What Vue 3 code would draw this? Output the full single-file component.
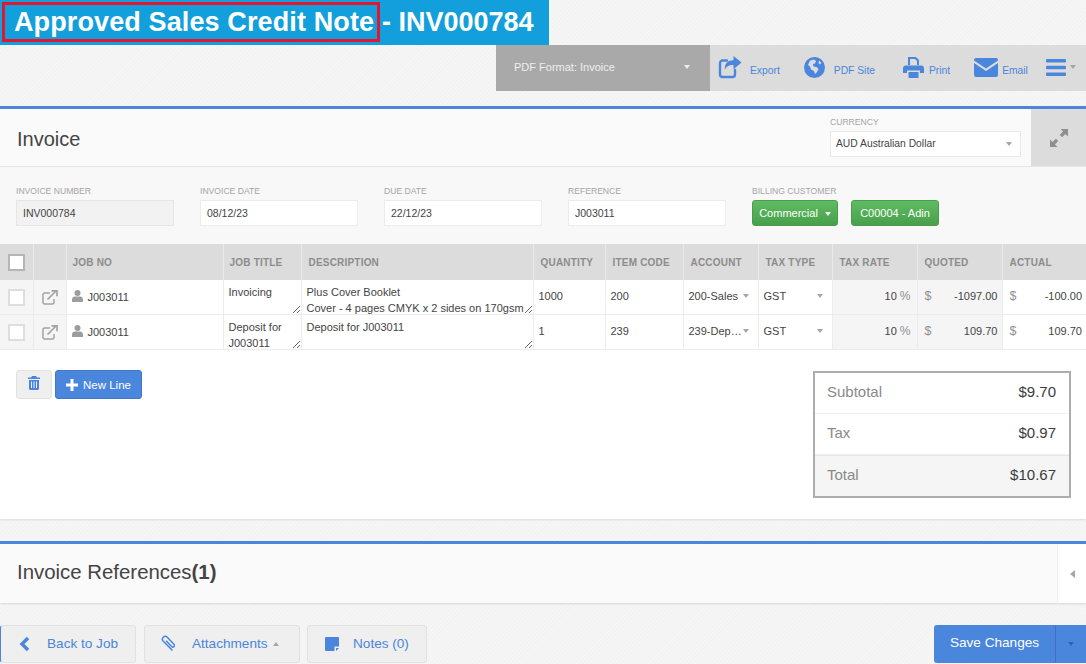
<template>
  <div class="page">
    <!-- Title banner -->
    <header class="banner">
      <span class="status">Approved Sales Credit Note</span>
      <span class="inv">- INV000784</span>
    </header>

    <!-- Toolbar -->
    <div class="toolbar">
      <div class="pdf-format"><span>PDF Format: Invoice</span><i class="caret light"></i></div>
      <nav class="tools">
        <a class="tool export">
          <svg width="24" height="24" viewBox="0 0 24 24" fill="none" stroke="#4a86dc" stroke-width="2.4">
            <path d="M17 15v4.5a2.5 2.5 0 0 1-2.5 2.500H4.500A2.500 2.500 0 0 1 2 19.500V8a2.500 2.500 0 0 1 2.500-2.500H9" stroke-linecap="round"/>
            <path d="M15.500 1v4.200C10 5.200 6.500 8 6.800 15c1.500-3.800 4.500-5 8.700-5v4.300L23.500 7.500z" fill="#4a86dc" stroke="none"/>
          </svg>
          <span>Export</span>
        </a>
        <a class="tool site">
          <svg width="21" height="21" viewBox="0 0 21 21">
            <circle cx="10.500" cy="10.500" r="10.500" fill="#4a86dc"/>
            <path d="M6 3.500l4-1 2 1.500-1 2.500-2 .5.500 2.500 3 .5 2 2-1.500 3-2 2-1-3-3-1.500-1-3-2-1.500zM15 3.500l2.500 2.500-1.500 1.500-1.500-1.500z" fill="#dcdcdc"/>
          </svg>
          <span>PDF Site</span>
        </a>
        <a class="tool print">
          <svg width="21" height="21" viewBox="0 0 21 21" fill="#4a86dc">
            <path d="M5 0h8l3 3v5h-2V4l-2-2H7v6H5zM3 8.500h15a3 3 0 0 1 3 3V16h-4v-2.500H4V16H0v-4.500a3 3 0 0 1 3-3zM5.500 15h10v6h-10z"/>
          </svg>
          <span>Print</span>
        </a>
        <a class="tool email">
          <svg width="24" height="19" viewBox="0 0 24 19" fill="#4a86dc">
            <path d="M2 0h20a2 2 0 0 1 2 2v.6L12 10.500 0 2.600V2a2 2 0 0 1 2-2z"/>
            <path d="M0 5l12 8 12-8v12a2 2 0 0 1-2 2H2a2 2 0 0 1-2-2z"/>
          </svg>
          <span>Email</span>
        </a>
        <a class="tool burger">
          <svg width="20" height="17" viewBox="0 0 20 17" fill="#4a86dc">
            <rect width="20" height="3.500" rx="1"/>
            <rect y="6.700" width="20" height="3.500" rx="1"/>
            <rect y="13.400" width="20" height="3.500" rx="1"/>
          </svg>
          <i class="caret"></i>
        </a>
      </nav>
    </div>

    <!-- Invoice panel -->
    <section class="panel">
      <div class="panel-head">
        <h1>Invoice</h1>
        <div class="currency">
          <label>CURRENCY</label>
          <div class="select-box"><span>AUD Australian Dollar</span><i class="caret"></i></div>
        </div>
        <div class="expand">
          <svg width="18" height="18" viewBox="0 0 18 18" fill="#8f8f8f">
            <path d="M10.500 0H18v7.500l-2.600-2.600-3.300 3.300-2.300-2.300 3.300-3.300zM0 18v-7.500l2.600 2.600 3.300-3.300 2.300 2.300-3.300 3.300L7.500 18z"/>
          </svg>
        </div>
      </div>

      <div class="fields">
        <div class="field" v-for="f in fields" :key="f.label">
          <label>{{ f.label }}</label>
          <div class="input" :class="{ readonly: f.readonly }">{{ f.value }}</div>
        </div>
        <div class="field billing">
          <label>BILLING CUSTOMER</label>
          <div class="billing-btns">
            <button class="green commercial">Commercial<i class="caret light"></i></button>
            <button class="green adin">C00004 - Adin</button>
          </div>
        </div>
      </div>

      <table class="lines">
        <colgroup>
          <col v-for="(w, i) in colWidths" :key="i" :style="{ width: w + 'px' }" />
        </colgroup>
        <thead>
          <tr>
            <th class="center"><span class="check head"></span></th>
            <th></th>
            <th class="tight">JOB NO</th>
            <th class="tight">JOB TITLE</th>
            <th>DESCRIPTION</th>
            <th>QUANTITY</th>
            <th>ITEM CODE</th>
            <th>ACCOUNT</th>
            <th>TAX TYPE</th>
            <th>TAX RATE</th>
            <th>QUOTED</th>
            <th>ACTUAL</th>
          </tr>
        </thead>
        <tbody>
          <tr v-for="row in rows" :key="row.title">
            <td class="center shade"><span class="check"></span></td>
            <td class="center shade">
              <svg class="ext" width="16" height="15" viewBox="0 0 16 15" fill="none" stroke="#a3a3a3" stroke-width="1.500">
                <path d="M12 9v3.500a1.500 1.500 0 0 1-1.500 1.500h-8A1.500 1.500 0 0 1 1 12.500v-8A1.500 1.500 0 0 1 2.500 3H8"/>
                <path d="M5.500 9.500L14 1M9.500 .8H15v5.500" stroke-width="1.700"/>
              </svg>
            </td>
            <td class="job">
              <svg width="11" height="12" viewBox="0 0 11 12" fill="#9d9d9d">
                <circle cx="5.500" cy="3" r="3"/>
                <path d="M0 12V9.500C0 7.500 1.500 6.500 3 6.500h5c1.500 0 3 1 3 3V12z"/>
              </svg>
              <span>{{ row.job }}</span>
            </td>
            <td class="area"><textarea class="title-area">{{ row.title }}</textarea></td>
            <td class="area"><textarea class="desc-area">{{ row.desc }}</textarea></td>
            <td class="plain">{{ row.qty }}</td>
            <td class="plain">{{ row.code }}</td>
            <td class="pick"><div><span>{{ row.account }}</span><i class="caret"></i></div></td>
            <td class="pick"><div><span>GST</span><i class="caret"></i></div></td>
            <td class="rate shade">10 <em>%</em></td>
            <td class="money shade"><div><em>$</em><span>{{ row.quoted }}</span></div></td>
            <td class="money"><div><em>$</em><span>{{ row.actual }}</span></div></td>
          </tr>
        </tbody>
      </table>

      <div class="below">
        <div class="line-btns">
          <button class="trash">
            <svg width="12" height="14" viewBox="0 0 12 14" fill="#4a86dc">
              <path d="M4 0h4l1 1.500h3V3H0V1.500h3zM1 4h10v8.500a1.500 1.500 0 0 1-1.500 1.500h-7A1.500 1.500 0 0 1 1 12.500zm2 1.500V12h1V5.500zm2.500 0V12h1V5.500zm2.500 0V12h1V5.500z" fill-rule="evenodd"/>
            </svg>
          </button>
          <button class="new-line">
            <svg width="12" height="12" viewBox="0 0 12 12" fill="#fff">
              <path d="M4.500 0h3v4.500H12v3H7.500V12h-3V7.500H0v-3h4.500z"/>
            </svg>
            New Line
          </button>
        </div>
        <div class="totals">
          <div class="total-row" v-for="t in totals" :key="t.label" :class="{ grand: t.label === 'Total' }">
            <span>{{ t.label }}</span><b>{{ t.value }}</b>
          </div>
        </div>
      </div>
    </section>

    <!-- References panel -->
    <section class="refs">
      <h2>Invoice References<b>(1)</b></h2>
      <div class="refs-toggle"><i class="caret-left"></i></div>
    </section>

    <!-- Footer actions -->
    <footer class="actions">
      <button class="foot back">
        <svg width="11" height="16" viewBox="0 0 11 16" fill="none" stroke="#4a86dc" stroke-width="3.400"><path d="M9 2L3 8l6 6"/></svg>
        Back to Job
      </button>
      <button class="foot attach">
        <svg width="14" height="17" viewBox="0 0 14 17" fill="none" stroke="#4a86dc" stroke-width="1.500">
          <path d="M11.500 15.500L2.300 6.200a2.800 2.800 0 0 1 4-4l6.800 7.300a1.600 1.600 0 0 1-2.300 2.200L5 5.800"/>
        </svg>
        <span>Attachments<i class="caret up"></i></span>
      </button>
      <button class="foot notes">
        <svg width="14" height="14" viewBox="0 0 14 14" fill="#4a86dc"><path d="M1 0h12a1 1 0 0 1 1 1v8.500H9.500V14H1a1 1 0 0 1-1-1V1a1 1 0 0 1 1-1zM11 11h3l-3 3z"/></svg>
        Notes (0)
      </button>
      <div class="save">
        <span class="save-main">Save Changes</span>
        <span class="save-drop"><i class="caret dark"></i></span>
      </div>
    </footer>
  </div>
</template>

<script setup>
const fields = [
  { label: 'INVOICE NUMBER', value: 'INV000784', readonly: true },
  { label: 'INVOICE DATE', value: '08/12/23' },
  { label: 'DUE DATE', value: '22/12/23' },
  { label: 'REFERENCE', value: 'J003011' }
]

const colWidths = [33, 33, 157, 78, 232, 72, 78, 75, 74, 85, 85, 84]

const rows = [
  {
    job: 'J003011',
    title: 'Invoicing',
    desc: 'Plus Cover Booklet\nCover - 4 pages CMYK x 2 sides on 170gsm',
    qty: '1000',
    code: '200',
    account: '200-Sales',
    quoted: '-1097.00',
    actual: '-100.00'
  },
  {
    job: 'J003011',
    title: 'Deposit for J003011',
    desc: 'Deposit for J003011',
    qty: '1',
    code: '239',
    account: '239-Dep…',
    quoted: '109.70',
    actual: '109.70'
  }
]

const totals = [
  { label: 'Subtotal', value: '$9.70' },
  { label: 'Tax', value: '$0.97' },
  { label: 'Total', value: '$10.67' }
]
</script>

<style>
html, body {
  margin: 0;
  overflow: hidden;
}
</style>

<style scoped>
.page {
  width: 1086px;
  height: 664px;
  overflow: hidden;
  font-family: "Liberation Sans", Arial, sans-serif;
  color: #333;
  background-color: #f4f4f4;
  background-image: repeating-linear-gradient(135deg, #f6f6f6 0, #f6f6f6 1px, #f2f2f2 2px, #f4f4f4 3px);
}

.banner {
  box-sizing: border-box;
  width: 549px;
  height: 45px;
  padding: 2px 0 3px 2px;
  background: #129fdb;
  color: #fff;
  font-size: 27px;
  font-weight: 700;
  display: flex;
  align-items: center;
}

.status {
  box-sizing: border-box;
  height: 40px;
  width: 378px;
  border: 3px solid #e2162e;
  padding-left: 9px;
  line-height: 34px;
  letter-spacing: 0.12px;
  white-space: nowrap;
}

.inv {
  margin-left: 2px;
  white-space: nowrap;
}

.toolbar {
  height: 46px;
  padding-left: 496px;
  display: flex;
}

.pdf-format {
  box-sizing: border-box;
  width: 214px;
  padding: 0 20px 3px 18px;
  background: #a9a9a9;
  color: #eee;
  font-size: 11px;
  display: flex;
  align-items: center;
  justify-content: space-between;
}

.tools {
  flex: 1;
  box-sizing: border-box;
  padding-bottom: 2px;
  background: #dcdcdc;
  display: flex;
  align-items: center;
  color: #4a86dc;
  font-size: 10.300px;
}

.tool {
  display: flex;
  align-items: center;
}

.tool span {
  margin-top: 6px;
}

.export {
  margin-left: 8px;
}

.export span {
  margin-left: 8px;
}

.site {
  margin-left: 24px;
}

.site span {
  margin-left: 9px;
}

.print {
  margin-left: 28px;
}

.print span {
  margin-left: 5px;
}

.email {
  margin-left: 24px;
}

.email span {
  margin-left: 4px;
}

.burger {
  margin-left: 18px;
}

.burger .caret {
  margin-left: 4px;
}

.caret {
  display: inline-block;
  width: 0;
  height: 0;
  border-left: 3px solid transparent;
  border-right: 3px solid transparent;
  border-top: 4px solid #a6a6a6;
}

.caret.light {
  border-top-color: #eee;
}

.caret.dark {
  border-top-color: #2f64b3;
}

.caret.up {
  border-top: none;
  border-bottom: 4px solid #a6a6a6;
  margin-left: 5px;
  vertical-align: middle;
}

.panel {
  margin-top: 15px;
  background: #fff;
  border-top: 3px solid #4a86dc;
  height: 410px;
  box-shadow: 0 1px 2px rgba(0, 0, 0, 0.1);
}

.panel-head {
  height: 58px;
  background: #fafafa;
  border-bottom: 1px solid #e6e6e6;
  box-sizing: border-box;
  display: flex;
  align-items: stretch;
}

.panel-head h1 {
  flex: 1;
  margin: 0;
  padding: 16px 0 0 17px;
  font-size: 20px;
  line-height: 28px;
  font-weight: 400;
  color: #444;
}

.currency {
  width: 191px;
  margin-right: 10px;
  padding-top: 8px;
}

label {
  display: block;
  font-size: 8.600px;
  line-height: 10px;
  color: #a5a5a5;
}

.select-box {
  box-sizing: border-box;
  height: 26px;
  margin-top: 4px;
  padding: 0 8px 1px 5px;
  background: #fff;
  border: 1px solid #e8e8e8;
  font-size: 10.300px;
  color: #444;
  display: flex;
  align-items: center;
  justify-content: space-between;
}

.expand {
  width: 55px;
  background: #dcdcdc;
  display: flex;
  align-items: center;
  justify-content: center;
}

.fields {
  box-sizing: border-box;
  height: 77px;
  padding: 19px 0 0 16px;
  background: #f8f8f8;
  display: flex;
  gap: 26px;
}

.field {
  width: 158px;
}

.field.billing {
  width: auto;
}

.input {
  box-sizing: border-box;
  height: 26px;
  margin-top: 4px;
  padding: 0 6px;
  line-height: 24px;
  background: #fff;
  border: 1px solid #ececec;
  font-size: 10.500px;
  color: #444;
}

.input.readonly {
  background: #f2f2f2;
  border-color: #e6e6e6;
}

.billing-btns {
  display: flex;
  gap: 13px;
  margin-top: 4px;
}

.green {
  height: 26px;
  padding: 0;
  border: 1px solid #4a9b4c;
  border-radius: 3px;
  background: linear-gradient(#5fbc62, #489f4b);
  color: #fff;
  font: 11px "Liberation Sans", Arial, sans-serif;
}

.commercial {
  width: 86px;
}

.commercial .caret {
  margin-left: 7px;
  vertical-align: middle;
}

.adin {
  width: 88px;
}

.lines {
  table-layout: fixed;
  width: 1086px;
  border-collapse: collapse;
}

.lines th {
  height: 36px;
  padding: 0 0 0 7px;
  background: #dcdcdc;
  border-left: 1px solid #e9e9e9;
  color: #8c8c8c;
  font-size: 10px;
  font-weight: 700;
  letter-spacing: 0.2px;
  text-align: left;
  white-space: nowrap;
}

.lines th:first-child {
  border-left: none;
}

.lines th.center {
  padding: 0;
  text-align: center;
}

.lines th.tight {
  padding-left: 6px;
}

.lines td {
  height: 34px;
  padding: 0 0 2px;
  box-sizing: border-box;
  border-left: 1px solid #ececec;
  border-bottom: 1px solid #ececec;
  font-size: 11px;
  color: #444;
  vertical-align: middle;
  overflow: hidden;
  white-space: nowrap;
}

.lines td:first-child {
  border-left: none;
}

.lines td.center {
  padding-bottom: 0;
  text-align: center;
}

.lines td.shade {
  background: #f5f5f5;
}

.check {
  display: inline-block;
  box-sizing: border-box;
  width: 17px;
  height: 17px;
  background: #fff;
  border: 2px solid #dedede;
  vertical-align: middle;
}

.check.head {
  border-color: #b5b5b5;
}

.ext {
  vertical-align: middle;
}

.lines td.job {
  padding-left: 5px;
}

.job svg {
  vertical-align: -1px;
}

.job span {
  margin-left: 5px;
}

.lines td.area {
  padding: 0;
  vertical-align: top;
}

textarea {
  display: block;
  box-sizing: border-box;
  width: 100%;
  height: 34px;
  margin: 0;
  padding: 4px 0 0 5px;
  border: none;
  outline: none;
  overflow: hidden;
  background: transparent;
  font: 11px/16px "Liberation Sans", Arial, sans-serif;
  color: #444;
  white-space: pre-wrap;
}

textarea.title-area {
  padding-right: 16px;
}

textarea.desc-area {
  white-space: pre;
}

.lines td.plain {
  padding-left: 5px;
}

.pick div {
  padding: 0 9px 0 5px;
  display: flex;
  align-items: center;
  justify-content: space-between;
}

.lines td.rate {
  padding-right: 6px;
  text-align: right;
}

em {
  font-style: normal;
  color: #909090;
}

.rate em {
  font-size: 12px;
}

.money em {
  font-size: 12.500px;
}

.money div {
  padding: 0 0 0 7px;
  display: flex;
  align-items: center;
  justify-content: space-between;
}

.money div span {
  padding-right: 4px;
}

.below {
  display: flex;
  justify-content: space-between;
  align-items: flex-start;
  padding: 20px 15px 0 16px;
}

.line-btns {
  display: flex;
  gap: 3px;
}

.trash {
  width: 36px;
  height: 29px;
  padding: 0;
  background: #efefef;
  border: 1px solid #e2e2e2;
  border-radius: 3px;
}

.new-line {
  width: 87px;
  height: 29px;
  padding: 0;
  background: #4a86dc;
  border: 1px solid #3f78cb;
  border-radius: 3px;
  color: #fff;
  font: 11.500px "Liberation Sans", Arial, sans-serif;
  display: flex;
  align-items: center;
  justify-content: center;
  gap: 5px;
}

.totals {
  box-sizing: border-box;
  width: 258px;
  height: 127px;
  margin-top: 1px;
  border: 2px solid #adadad;
}

.total-row {
  box-sizing: border-box;
  height: 41px;
  padding: 0 13px 3px 12px;
  border-bottom: 1px solid #f0f0f0;
  display: flex;
  align-items: center;
  justify-content: space-between;
  font-size: 15px;
  color: #8a8a8a;
}

.total-row b {
  font-weight: 400;
  color: #3c3c3c;
}

.total-row.grand {
  background: #f5f5f5;
  border-top: 1px solid #e6e6e6;
  border-bottom: none;
}

.refs {
  margin-top: 22px;
  height: 62px;
  box-sizing: border-box;
  border-top: 3px solid #4a86dc;
  background: #fafafa;
  box-shadow: 0 1px 2px rgba(0, 0, 0, 0.12);
  display: flex;
}

.refs h2 {
  flex: 1;
  margin: 0;
  padding-left: 17px;
  font-size: 20.400px;
  font-weight: 400;
  line-height: 56px;
  color: #444;
}

.refs-toggle {
  width: 28px;
  background: #fff;
  border-left: 1px solid #f0f0f0;
  display: flex;
  align-items: center;
  justify-content: center;
}

.caret-left {
  width: 0;
  height: 0;
  border-top: 4px solid transparent;
  border-bottom: 4px solid transparent;
  border-right: 5px solid #a6a6a6;
}

.actions {
  margin-top: 22px;
  display: flex;
  gap: 8px;
}

.foot {
  height: 38px;
  padding: 0 0 1px;
  background: #efefef;
  border: 1px solid #e2e2e2;
  border-radius: 3px;
  color: #4a86dc;
  font: 13.600px "Liberation Sans", Arial, sans-serif;
  display: flex;
  align-items: center;
}

.back {
  width: 136px;
  padding-left: 18px;
  gap: 17px;
  border-left-color: #4a86dc;
}

.attach {
  width: 156px;
  padding-left: 16px;
  gap: 17px;
}

.notes {
  width: 120px;
  padding-left: 17px;
  gap: 14px;
  margin-left: -1px;
}

.save {
  margin-left: auto;
  width: 152px;
  height: 38px;
  background: #4a86dc;
  border-radius: 3px 0 0 3px;
  color: #fff;
  font-size: 13.600px;
  display: flex;
}

.save-main {
  flex: 1;
  line-height: 36px;
  text-align: center;
}

.save-drop {
  width: 30px;
  border-left: 1px solid #3f73c2;
  display: flex;
  align-items: center;
  justify-content: center;
}
</style>
